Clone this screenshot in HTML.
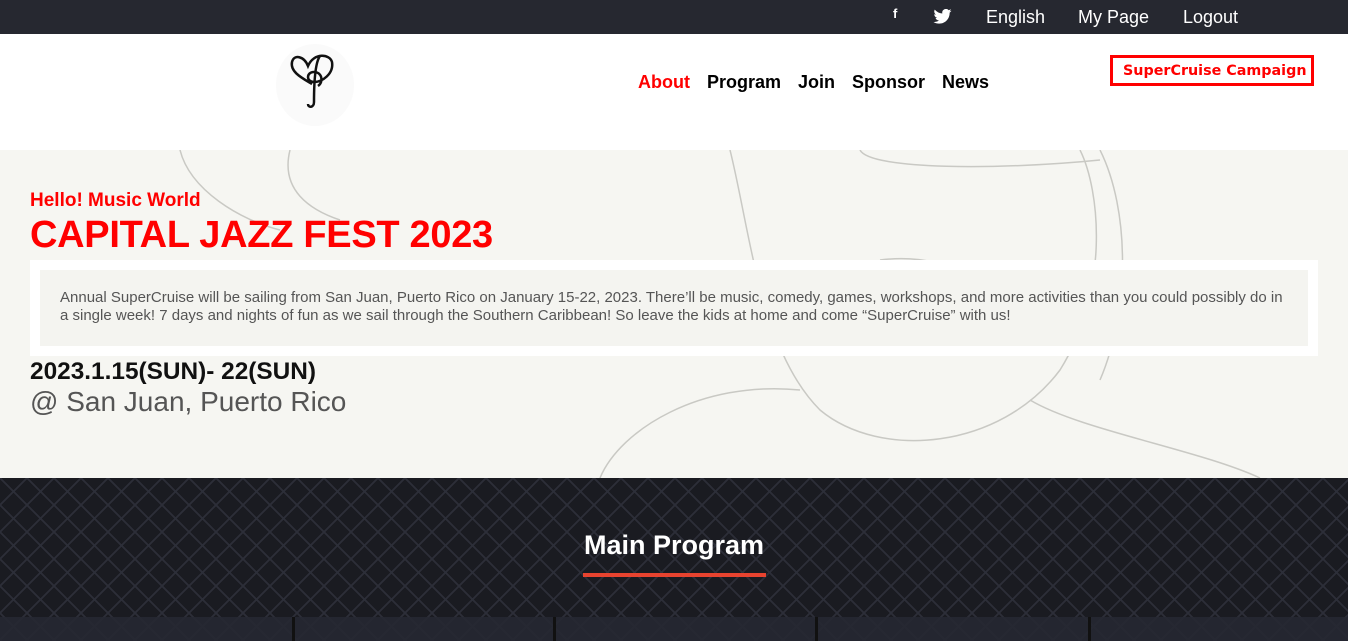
<!DOCTYPE html>
<html><head><meta charset="utf-8"><style>
*{margin:0;padding:0;box-sizing:border-box}
body{width:1348px;height:641px;overflow:hidden;font-family:"Liberation Sans",sans-serif;background:#fff;position:relative}
.top{position:absolute;left:0;top:0;width:1348px;height:34px;background:#262830;color:#fff;font-size:18px}
.top span{position:absolute;top:7px}
.hdr{position:absolute;top:34px;left:0;width:1348px;height:116px;background:#fff}
.nav{position:absolute;top:72px;font-size:18px;font-weight:bold;color:#000}
.camp{position:absolute;left:1110px;top:55px;width:204px;height:31px;border:3px solid #f00;color:#f00;font-family:"DejaVu Sans",sans-serif;font-weight:bold;font-size:14.3px;padding:5px 0 0 10px;white-space:nowrap;overflow:hidden}
.hero{position:absolute;top:150px;left:0;width:1348px;height:328px;background:#f6f6f2;overflow:hidden}
.dark{position:absolute;top:478px;left:0;width:1348px;height:163px;background-color:#1a1b21;
background-image:linear-gradient(45deg,transparent 48%,#2c2e38 48%,#2c2e38 52%,transparent 52%),linear-gradient(-45deg,transparent 48%,#2c2e38 48%,#2c2e38 52%,transparent 52%);background-size:27px 27px}
.strip{position:absolute;top:617px;left:0;width:1348px;height:24px;background:rgba(38,40,50,.9)}
</style></head><body>
<div class="top">
<span style="left:893px;font-size:13px;top:6px;font-weight:bold">f</span>
<svg style="position:absolute;left:933px;top:9px" width="19" height="15" viewBox="0 0 24 20"><path fill="#fff" d="M24 2.4a10 10 0 0 1-2.8.8A5 5 0 0 0 23.3.4a10 10 0 0 1-3.1 1.2A4.9 4.9 0 0 0 11.8 6 14 14 0 0 1 1.7.9a4.9 4.9 0 0 0 1.5 6.6A4.9 4.9 0 0 1 1 6.9a4.9 4.9 0 0 0 3.9 4.9 5 5 0 0 1-2.2.1 4.9 4.9 0 0 0 4.6 3.4A9.9 9.9 0 0 1 0 17.3 14 14 0 0 0 7.5 19.5c9.1 0 14-7.5 14-14v-.6A10 10 0 0 0 24 2.4z"/></svg>
<span style="left:986px">English</span><span style="left:1078px">My Page</span><span style="left:1183px">Logout</span>
</div>
<div class="hdr">
<div style="position:absolute;left:276px;top:10px;width:78px;height:82px;border-radius:50%;background:#fafafa"></div>
<svg style="position:absolute;left:288px;top:18px" width="52" height="58" viewBox="0 0 52 58"><path d="M24 32C14 26 2 20 4 10 6 2 16 4 20 14 26 0 42 2 44 10 46 22 34 30 26 30 18 30 18 20 26 20 34 20 36 30 30 34M32 4C26 12 26 40 26 50 26 56 20 56 20 52" fill="none" stroke="#111" stroke-width="2.5"/></svg>
</div>
<div class="nav" style="left:638px;color:#f00">About</div>
<div class="nav" style="left:707px">Program</div>
<div class="nav" style="left:798px">Join</div>
<div class="nav" style="left:852px">Sponsor</div>
<div class="nav" style="left:942px">News</div>
<div class="camp">SuperCruise Campaign</div>
<div class="hero">
<svg style="position:absolute;left:0;top:0" width="1348" height="328" fill="none" stroke="#c9c9c4" stroke-width="1.5">
<path d="M180 0C190 40 240 70 280 80M290 0C280 40 310 60 340 70"/>
<path d="M730 0C750 80 760 200 820 260 880 310 1000 300 1060 220 1110 140 1100 40 1080 0"/>
<path d="M860 0C870 20 1000 20 1100 10M760 120C800 110 840 115 870 125M880 110C920 105 950 115 970 125"/>
<path d="M600 328C620 280 700 230 800 240M1030 250C1080 280 1200 300 1260 328"/>
<path d="M1100 0C1130 60 1130 160 1100 230"/>
</svg>
<div style="position:absolute;left:30px;top:40px;color:#f00;font-weight:bold;font-size:19px">Hello! Music World</div>
<div style="position:absolute;left:30px;top:64px;color:#f00;font-weight:bold;font-size:38px;letter-spacing:-0.3px">CAPITAL JAZZ FEST 2023</div>
<div style="position:absolute;left:30px;top:110px;width:1288px;height:96px;background:#fff;padding:10px">
<div style="background:#f4f4f0;height:76px;padding:19px 20px;color:#555;font-size:15px;line-height:18px">Annual SuperCruise will be sailing from San Juan, Puerto Rico on January 15-22, 2023. There’ll be music, comedy, games, workshops, and more activities than you could possibly do in a single week! 7 days and nights of fun as we sail through the Southern Caribbean! So leave the kids at home and come “SuperCruise” with us!</div></div>
<div style="position:absolute;left:30px;top:208px;font-weight:bold;font-size:24.4px;color:#111">2023.1.15(SUN)- 22(SUN)</div>
<div style="position:absolute;left:30px;top:236px;font-size:28px;color:#555">@ San Juan, Puerto Rico</div>
</div>
<div class="dark">
<div style="position:absolute;left:0;width:1348px;top:52px;text-align:center;color:#fff;font-weight:bold;font-size:27px">Main Program</div>
<div style="position:absolute;left:583px;top:95px;width:183px;height:4px;background:#e8432f"></div>
</div>
<div class="strip">
<div style="position:absolute;left:292px;top:0;width:3px;height:24px;background:#111"></div>
<div style="position:absolute;left:553px;top:0;width:3px;height:24px;background:#111"></div>
<div style="position:absolute;left:815px;top:0;width:3px;height:24px;background:#111"></div>
<div style="position:absolute;left:1088px;top:0;width:3px;height:24px;background:#111"></div>
</div>
</body></html>
